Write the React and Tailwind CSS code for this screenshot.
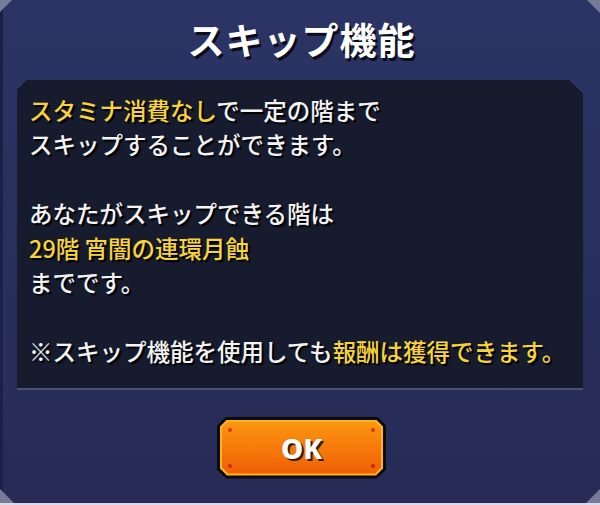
import React from 'react';

const FONT = '"Noto Sans CJK JP", "Noto Sans", sans-serif';

const Y = ({ children }) => <span className="text-[#f8d43a]">{children}</span>;

function OkButton() {
  return (
    <div className="relative w-[169px] h-[62px] bg-[#0a0a0a] p-[3px] [clip-path:polygon(9px_0,calc(100%_-_9px)_0,100%_9px,100%_calc(100%_-_9px),calc(100%_-_9px)_100%,9px_100%,0_calc(100%_-_9px),0_9px)]">
      <div className="relative w-full h-full bg-[#ffb41c] p-[2px] [clip-path:polygon(7px_0,calc(100%_-_7px)_0,100%_7px,100%_calc(100%_-_7px),calc(100%_-_7px)_100%,7px_100%,0_calc(100%_-_7px),0_7px)]">
        <div className="relative w-full h-full bg-gradient-to-b from-[#fb9612] via-[#f67a0b] to-[#ee5e06] flex items-center justify-center [clip-path:polygon(6px_0,calc(100%_-_6px)_0,100%_6px,100%_calc(100%_-_6px),calc(100%_-_6px)_100%,6px_100%,0_calc(100%_-_6px),0_6px)]">
          <span className="absolute left-[6px] top-[6px] w-[4px] h-[4px] rounded-full bg-[#d83a10]" />
          <span className="absolute right-[6px] top-[6px] w-[4px] h-[4px] rounded-full bg-[#d83a10]" />
          <span className="absolute left-[6px] bottom-[6px] w-[4px] h-[4px] rounded-full bg-[#c82a08]" />
          <span className="absolute right-[6px] bottom-[6px] w-[4px] h-[4px] rounded-full bg-[#c82a08]" />
          <span
            className="text-white text-[28px] font-extrabold leading-none [text-shadow:2px_2px_0_#3a1a00]"
            style={{ fontFamily: '"Noto Sans", sans-serif' }}
          >
            OK
          </span>
        </div>
      </div>
    </div>
  );
}

export default function App() {
  return (
    <div className="w-[600px] h-[505px] bg-[#767c98] flex flex-col" style={{ fontFamily: FONT }}>
      <div className="flex-1 flex flex-col bg-gradient-to-b from-[#2b3464] to-[#272b56] border-l-[3px] border-[#1c2044] [clip-path:polygon(12px_0,calc(100%_-_13px)_0,100%_13px,100%_calc(100%_-_14px),calc(100%_-_14px)_100%,14px_100%,0_calc(100%_-_14px),0_12px)]">
        <div className="h-[80px] flex items-center justify-center pb-[2px]">
          <h1 className="text-white text-[37px] font-bold leading-none tracking-[1px] [text-shadow:2px_3px_0_#0b0d1c]">
            スキップ機能
          </h1>
        </div>

        <div className="ml-[14px] mr-[17px] h-[310px] bg-[#4a5274] pb-[2px] [clip-path:polygon(9px_0,calc(100%_-_13px)_0,100%_13px,100%_100%,0_100%,0_9px)]">
          <div className="h-full bg-[#161b2e] pl-[12px] pt-[13px] text-[23.5px] font-medium leading-[34.4px] text-[#f4f4f4] [text-shadow:2px_2px_1px_#000] [clip-path:polygon(9px_0,calc(100%_-_13px)_0,100%_13px,100%_100%,0_100%,0_9px)]">
            <p><Y>スタミナ消費なし</Y>で一定の階まで</p>
            <p>スキップすることができます。</p>
            <p>&nbsp;</p>
            <p>あなたがスキップできる階は</p>
            <p><Y>29階 宵闇の連環月蝕</Y></p>
            <p>までです。</p>
            <p>&nbsp;</p>
            <p className="whitespace-nowrap">※スキップ機能を使用しても<Y>報酬は獲得できます。</Y></p>
          </div>
        </div>

        <div className="flex-1 flex items-center justify-center pt-[2px]">
          <OkButton />
        </div>
      </div>
      <div className="h-[2px] bg-[#d8dce8]" />
    </div>
  );
}
